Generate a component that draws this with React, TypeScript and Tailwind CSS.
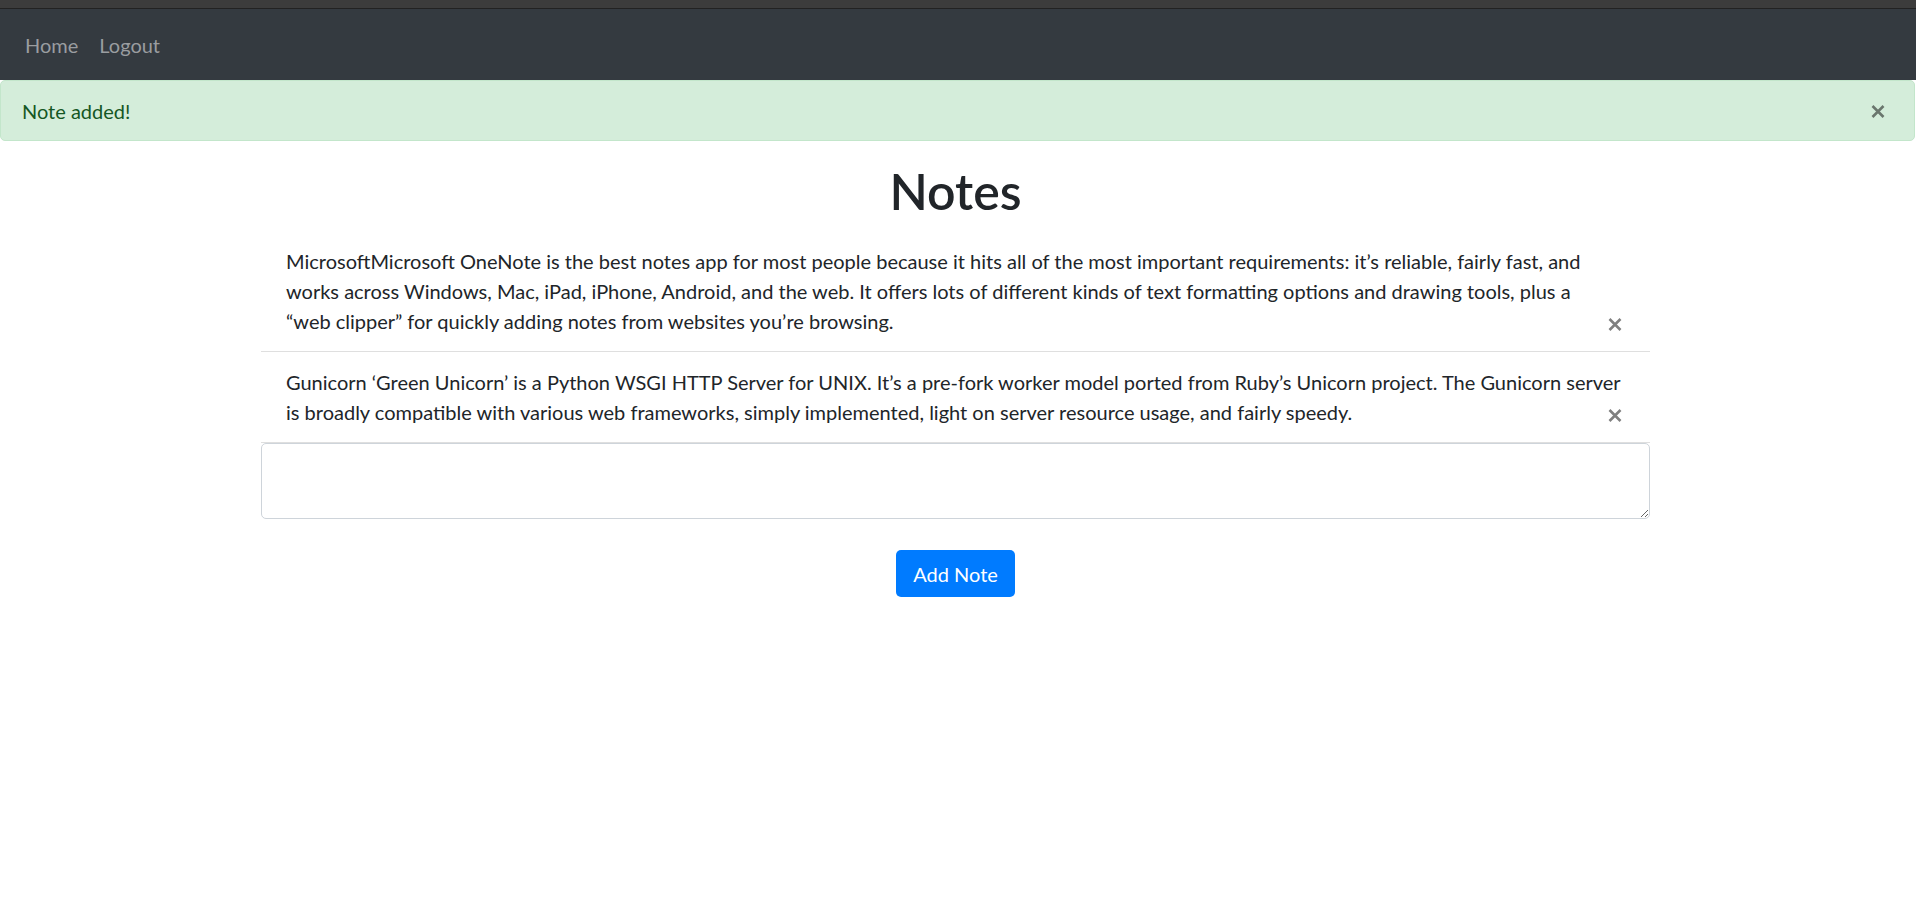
import * as React from 'react';

const notes = [
  "MicrosoftMicrosoft OneNote is the best notes app for most people because it hits all of the most important requirements: it\u2019s reliable, fairly fast, and works across Windows, Mac, iPad, iPhone, Android, and the web. It offers lots of different kinds of text formatting options and drawing tools, plus a \u201cweb\u00a0clipper\u201d for quickly adding notes from websites you\u2019re browsing.",
  "Gunicorn \u2018Green Unicorn\u2019 is a Python WSGI HTTP Server for UNIX. It\u2019s a pre-fork worker model ported from Ruby\u2019s Unicorn project. The Gunicorn server is broadly compatible with various web frameworks, simply implemented, light on server resource usage, and fairly speedy.",
];

const Times = ({ className }: { className?: string }) => (
  <svg width="14" height="13" viewBox="0 0 14 13" className={className}>
    <path d="M1.5 1 L12.5 12 M12.5 1 L1.5 12" stroke="currentColor" strokeWidth="2.6" strokeLinecap="butt" />
  </svg>
);

export default function App() {
  return (
    <div className="min-h-screen bg-white text-[#212529] text-[20px] leading-[30px]" style={{ fontFamily: 'Lato, "Open Sans", sans-serif' }}>
      <div className="h-[9px] bg-[#3c3c3c] border-b border-[#222]"></div>

      <nav className="h-[71px] bg-[#343a40] flex items-center pl-[25px] gap-[21px]">
        <a className="text-[#9a9da0]">Home</a>
        <a className="text-[#9a9da0]">Logout</a>
      </nav>

      <div className="h-[61px] mr-[1px] bg-[#d4edda] border border-[#c3e6cb] rounded-[5px] text-[#155724] flex items-center justify-between pl-[21px] pr-[29px]">
        <span>Note added!</span>
        <button className="text-black/50 pt-[2px]">
          <Times />
        </button>
      </div>

      <main className="w-[1389px] ml-[261px] pt-[20px]">
        <h1 className="text-[50px] leading-[60px] font-semibold text-center mb-[10px]">Notes</h1>

        <ul>
          {notes.map((note, i) => (
            <li key={i} className="px-[25px] py-[15px] border-b border-[#dfdfdf]">
              {note}
              <button className="float-right pt-[12px] mr-[3px] text-black/50">
                <Times />
              </button>
            </li>
          ))}
        </ul>

        <textarea className="block w-full h-[76px] border border-[#ced4da] rounded-[5px] px-[15px] py-[8px] resize-y"></textarea>

        <div className="flex justify-center mt-[31px]">
          <button className="w-[119px] h-[47px] bg-[#007bff] text-white rounded-[5px]">Add Note</button>
        </div>
      </main>
    </div>
  );
}
